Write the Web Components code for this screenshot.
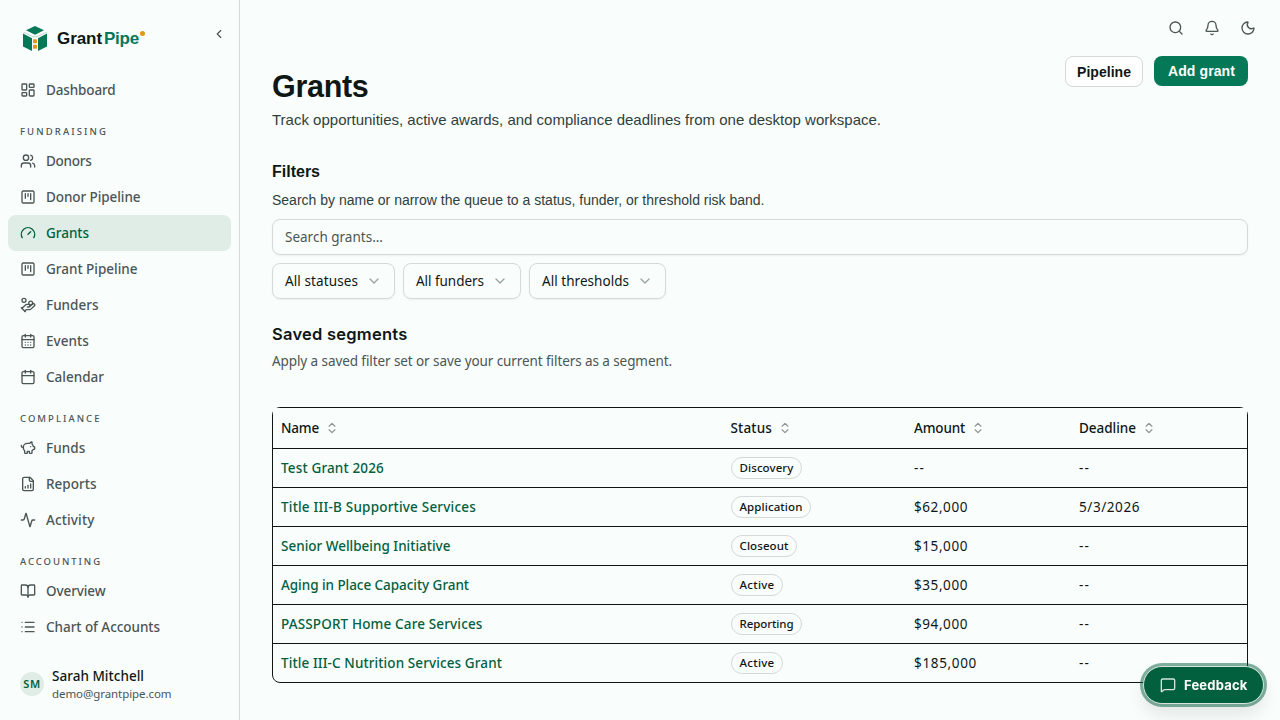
<!DOCTYPE html>
<html lang="en">
<head>
<meta charset="utf-8">
<title>Grants - GrantPipe</title>
<style>
  html, body {
    margin: 0;
    height: 100%;
  }

  body {
    --bg: #f9fdfc;
    --ink: #0f1716;
    --muted: #4b5554;
    --line: #d3dad8;
    --brand: #047857;
    --brand-dark: #03603f;
    --tint: #dfede6;
    --sans: "Noto Sans", Roboto, sans-serif;
    --arial: "Liberation Sans", Arial, sans-serif;
    background: var(--bg);
    color: var(--ink);
    font: 13.5px/20px var(--sans);
    overflow: hidden;
  }
</style>
</head>
<body>

<grant-app>
  <side-bar slot="sidebar">
    <nav-item icon="dashboard" fit="69.5">Dashboard</nav-item>
    <nav-group label="FUNDRAISING" fit="88">
      <nav-item icon="users" fit="45.5">Donors</nav-item>
      <nav-item icon="kanban" fit="94.5">Donor Pipeline</nav-item>
      <nav-item icon="gauge" fit="43" active>Grants</nav-item>
      <nav-item icon="kanban" fit="91.5">Grant Pipeline</nav-item>
      <nav-item icon="coins" fit="52.5">Funders</nav-item>
      <nav-item icon="events" fit="43">Events</nav-item>
      <nav-item icon="calendar" fit="58">Calendar</nav-item>
    </nav-group>
    <nav-group label="COMPLIANCE" fit="81.5">
      <nav-item icon="piggy" fit="39.5">Funds</nav-item>
      <nav-item icon="report" fit="50.5">Reports</nav-item>
      <nav-item icon="activity" fit="48.5">Activity</nav-item>
    </nav-group>
    <nav-group label="ACCOUNTING" fit="82">
      <nav-item icon="book" fit="59.5">Overview</nav-item>
      <nav-item icon="list" fit="114">Chart of Accounts</nav-item>
    </nav-group>
    <user-card slot="footer" initials="SM" name="Sarah Mitchell" email="demo@grantpipe.com"></user-card>
  </side-bar>

  <page-header>
    <fit-text slot="title" fit="96.5">Grants</fit-text>
    <fit-text slot="lead" fit="609">Track opportunities, active awards, and compliance deadlines from one desktop workspace.</fit-text>
    <action-button slot="actions" fit="54">Pipeline</action-button>
    <action-button slot="actions" primary fit="67">Add grant</action-button>
  </page-header>
  <filter-panel></filter-panel>
  <saved-segments></saved-segments>
  <grant-table></grant-table>
  <feedback-button slot="overlay"></feedback-button>
</grant-app>

<script>
const ICONS = {
  dashboard: '<rect width="7" height="9" x="3" y="3" rx="1"/><rect width="7" height="5" x="14" y="3" rx="1"/><rect width="7" height="9" x="14" y="12" rx="1"/><rect width="7" height="5" x="3" y="16" rx="1"/>',
  users: '<path d="M16 21v-2a4 4 0 0 0-4-4H6a4 4 0 0 0-4 4v2"/><path d="M16 3.128a4 4 0 0 1 0 7.744"/><path d="M22 21v-2a4 4 0 0 0-3-3.87"/><circle cx="9" cy="7" r="4"/>',
  kanban: '<rect width="18" height="18" x="3" y="3" rx="2"/><path d="M8 7v7"/><path d="M12 7v4"/><path d="M16 7v9"/>',
  gauge: '<path d="m12 14 4-4"/><path d="M3.34 19a10 10 0 1 1 17.32 0"/>',
  coins: '<path d="M11 15h2a2 2 0 1 0 0-4h-3c-.6 0-1.1.2-1.4.6L3 17"/><path d="m7 21 1.6-1.4c.3-.4.8-.6 1.4-.6h4c1.1 0 2.1-.4 2.8-1.2l4.6-4.4a2 2 0 0 0-2.75-2.91l-4.2 3.9"/><path d="m2 16 6 6"/><circle cx="16" cy="9" r="2.9"/><circle cx="6" cy="5" r="3"/>',
  events: '<path d="M8 2v4"/><path d="M16 2v4"/><rect width="18" height="18" x="3" y="4" rx="2"/><path d="M3 10h18"/><path d="M8 14h.01"/><path d="M12 14h.01"/><path d="M16 14h.01"/><path d="M8 18h.01"/><path d="M12 18h.01"/><path d="M16 18h.01"/>',
  calendar: '<path d="M8 2v4"/><path d="M16 2v4"/><rect width="18" height="18" x="3" y="4" rx="2"/><path d="M3 10h18"/>',
  piggy: '<path d="M11 17h3v2a1 1 0 0 0 1 1h2a1 1 0 0 0 1-1v-3a3.16 3.16 0 0 0 2-2h1a1 1 0 0 0 1-1v-2a1 1 0 0 0-1-1h-1a5 5 0 0 0-2-4V3a4 4 0 0 0-3.2 1.6l-.3.4H11a6 6 0 0 0-6 6v1a5 5 0 0 0 2 4v3a1 1 0 0 0 1 1h2a1 1 0 0 0 1-1z"/><path d="M16 10h.01"/><path d="M2 8v1a2 2 0 0 0 2 2h1"/>',
  report: '<path d="M15 2H6a2 2 0 0 0-2 2v16a2 2 0 0 0 2 2h12a2 2 0 0 0 2-2V7Z"/><path d="M14 2v4a2 2 0 0 0 2 2h4"/><path d="M8 18v-2"/><path d="M12 18v-4"/><path d="M16 18v-6"/>',
  activity: '<path d="M22 12h-2.48a2 2 0 0 0-1.93 1.46l-2.35 8.36a.25.25 0 0 1-.48 0L9.24 2.18a.25.25 0 0 0-.48 0l-2.35 8.36A2 2 0 0 1 4.49 12H2"/>',
  book: '<path d="M12 7v14"/><path d="M3 18a1 1 0 0 1-1-1V4a1 1 0 0 1 1-1h5a4 4 0 0 1 4 4 4 4 0 0 1 4-4h5a1 1 0 0 1 1 1v13a1 1 0 0 1-1 1h-6a3 3 0 0 0-3 3 3 3 0 0 0-3-3z"/>',
  list: '<path d="M3 5h.01"/><path d="M3 12h.01"/><path d="M3 19h.01"/><path d="M8 5h13"/><path d="M8 12h13"/><path d="M8 19h13"/>',
  search: '<path d="m21 21-4.34-4.34"/><circle cx="11" cy="11" r="8"/>',
  bell: '<path d="M10.268 21a2 2 0 0 0 3.464 0"/><path d="M3.262 15.326A1 1 0 0 0 4 17h16a1 1 0 0 0 .74-1.673C19.41 13.956 18 12.499 18 8A6 6 0 0 0 6 8c0 4.499-1.411 5.956-2.738 7.326"/>',
  moon: '<path d="M20.985 12.486a9 9 0 1 1-9.473-9.472c.405-.022.617.46.402.803a6 6 0 0 0 8.268 8.268c.344-.215.825-.004.803.401"/>',
  left: '<path d="m15 18-6-6 6-6"/>',
  down: '<path d="m6 9 6 6 6-6"/>',
  sort: '<path d="m7 15 5 5 5-5"/><path d="m7 9 5-5 5 5"/>',
  message: '<path d="M22 17a2 2 0 0 1-2 2H6.828a2 2 0 0 0-1.414.586l-2.202 2.202A.71.71 0 0 1 2 21.286V5a2 2 0 0 1 2-2h16a2 2 0 0 1 2 2z"/>'
};

const GRANTS = [
  { name: 'Test Grant 2026', fit: 103, status: 'Discovery', sfit: 54, amount: '--', deadline: '--' },
  { name: 'Title III-B Supportive Services', fit: 195, status: 'Application', sfit: 63, amount: '$62,000', deadline: '5/3/2026' },
  { name: 'Senior Wellbeing Initiative', fit: 169.5, status: 'Closeout', sfit: 49, amount: '$15,000', deadline: '--' },
  { name: 'Aging in Place Capacity Grant', fit: 188, status: 'Active', sfit: 35, amount: '$35,000', deadline: '--' },
  { name: 'PASSPORT Home Care Services', fit: 201.5, status: 'Reporting', sfit: 54, amount: '$94,000', deadline: '--' },
  { name: 'Title III-C Nutrition Services Grant', fit: 221, status: 'Active', sfit: 35, amount: '$185,000', deadline: '--' }
];

class BaseElement extends HTMLElement {
    constructor(){
        super();
        this._shadowRoot = this.attachShadow({ mode: 'open' });
    }

    connectedCallback(){
        const template = document.createElement('template');
        template.innerHTML = this.render();
        this._shadowRoot.replaceChildren(template.content.cloneNode(true));
    }

    attr(name){
        return this.getAttribute(name) || '';
    }
}

// Stroke icon on a 24 unit grid
class UiIcon extends BaseElement {
    render(){
        const size = this.attr('size') || 16;
        return `
          <style>
            :host { display: block; flex: none; width: ${size}px; height: ${size}px; }
            svg { display: block; }
          </style>
          <svg width="${size}" height="${size}" viewBox="0 0 24 24" fill="none" stroke="currentColor"
            stroke-width="2" stroke-linecap="round" stroke-linejoin="round">${ICONS[this.attr('name')]}</svg>
        `;
    }
}

// Single line of text, tracked out or in to the width given in "fit"
class FitText extends BaseElement {
    render(){
        return `
          <style>
            :host { display: inline-block; white-space: nowrap; }
          </style>
          <slot></slot>
        `;
    }

    connectedCallback(){
        super.connectedCallback();
        const fit = parseFloat(this.attr('fit'));
        if (!fit) return;
        const natural = this.getBoundingClientRect().width;
        this.style.letterSpacing = (fit - natural) / this.textContent.length + 'px';
    }
}

class GrantApp extends BaseElement {
    render(){
        return `
          <style>
            :host { display: flex; height: 100vh; }
            .content { flex: 1; min-width: 0; padding: 0 32px; }
            .topbar { display: flex; justify-content: flex-end; align-items: center; gap: 20px;
              height: 56px; margin-right: -8px; color: var(--muted); }
            .overlay { position: fixed; right: 16px; bottom: 16px; }
          </style>
          <slot name="sidebar"></slot>
          <div class="content">
            <div class="topbar">
              <ui-icon name="search"></ui-icon>
              <ui-icon name="bell"></ui-icon>
              <ui-icon name="moon"></ui-icon>
            </div>
            <slot></slot>
          </div>
          <div class="overlay"><slot name="overlay"></slot></div>
        `;
    }
}

class BrandLogo extends BaseElement {
    render(){
        return `
          <style>
            :host { display: flex; align-items: center; gap: 9px; font: bold 17px/24px var(--arial); }
            .word { display: flex; gap: 2px; }
            .pipe { color: var(--brand); }
            .dot { width: 5px; height: 5px; margin: 4px 0 0 -1.5px; border-radius: 50%; background: #dd9a1a; }
            svg { display: block; }
          </style>
          <svg width="26" height="28" viewBox="0 0 26 28">
            <path fill="#047857" d="M13 1 22 5.3 13 9.8 4 5.3z"/>
            <path fill="none" stroke="#a9cfc3" stroke-width=".8" d="M1.6 7.2 11 11.8h4L24.4 7.2"/>
            <path fill="#047857" d="M1 8.6 10 13.2V26L1 21.6zM25 8.6 16 13.2V26l9-4.4z"/>
            <rect x="11" y="14.2" width="4" height="4" rx="1" fill="#dd9a1a"/>
            <rect x="11" y="19.7" width="4" height="4" rx="1" fill="#dd9a1a"/>
          </svg>
          <div class="word">
            <fit-text fit="45">Grant</fit-text>
            <fit-text class="pipe" fit="35">Pipe</fit-text>
            <span class="dot"></span>
          </div>
        `;
    }
}

class SideBar extends BaseElement {
    render(){
        return `
          <style>
            :host { display: flex; flex-direction: column; box-sizing: border-box; flex: none;
              width: 240px; height: 100%; border-right: 1px solid var(--line); }
            header { display: flex; justify-content: space-between; align-items: flex-start;
              height: 47px; padding: 25px 13px 0 22px; }
            ui-icon { margin-top: 2px; color: var(--muted); }
            nav { flex: 1; padding: 0 8px; }
          </style>
          <header>
            <brand-logo></brand-logo>
            <ui-icon name="left" size="14"></ui-icon>
          </header>
          <nav><slot></slot></nav>
          <slot name="footer"></slot>
        `;
    }
}

class NavGroup extends BaseElement {
    render(){
        return `
          <style>
            .label { padding: 16px 12px 4px; font-size: 9.5px; font-weight: 500; line-height: 15px; color: var(--muted); }
            :host { display: block; }
            fit-text { display: block; width: max-content; }
          </style>
          <div class="label"><fit-text fit="${this.attr('fit')}">${this.attr('label')}</fit-text></div>
          <slot></slot>
        `;
    }
}

class NavItem extends BaseElement {
    render(){
        return `
          <style>
            :host { display: flex; align-items: center; gap: 10px; height: 36px; padding: 0 12px;
              border-radius: 8px; font-weight: 500; color: var(--muted); }
            :host([active]) { background: var(--tint); color: var(--brand-dark); }
          </style>
          <ui-icon name="${this.attr('icon')}"></ui-icon>
          <fit-text fit="${this.attr('fit')}"><slot></slot></fit-text>
        `;
    }

    connectedCallback(){
        super.connectedCallback();
        // the label goes in as plain text so that it can be measured
        this._shadowRoot.querySelector('fit-text').textContent = this.textContent;
    }
}

class UserCard extends BaseElement {
    render(){
        return `
          <style>
            :host { display: flex; align-items: center; gap: 8px; padding: 0 20px 19px; }
            .avatar { display: grid; place-items: center; width: 24px; height: 24px; border-radius: 50%;
              background: var(--tint); color: var(--brand-dark); font-size: 11px; font-weight: 600; }
            .who { display: flex; flex-direction: column; align-items: flex-start; }
            .name { font-weight: 500; line-height: 18px; }
            .mail { font-size: 11.5px; line-height: 16px; padding-top: 1px; margin-bottom: -1px; color: var(--muted); }
          </style>
          <div class="avatar"><fit-text fit="17.5">${this.attr('initials')}</fit-text></div>
          <div class="who">
            <fit-text class="name" fit="92">${this.attr('name')}</fit-text>
            <fit-text class="mail" fit="119.5">${this.attr('email')}</fit-text>
          </div>
        `;
    }
}

class PageHeader extends BaseElement {
    render(){
        return `
          <style>
            :host { display: flex; justify-content: space-between; font-family: var(--arial); }
            .text { padding-top: 11px; }
            h1 { margin: 0; font-size: 30.5px; line-height: 38px; }
            p { margin: 3px 0 0; font-size: 15px; line-height: 24px; color: #2f403b; }
            .actions { display: flex; align-items: flex-start; gap: 11px; }
          </style>
          <div class="text">
            <h1><slot name="title"></slot></h1>
            <p><slot name="lead"></slot></p>
          </div>
          <div class="actions"><slot name="actions"></slot></div>
        `;
    }
}

class ActionButton extends BaseElement {
    render(){
        return `
          <style>
            :host { display: block; }
            button { display: block; box-sizing: border-box; height: 31px; padding: 1px 11px 0 11.5px; border: 1px solid var(--line);
              border-radius: 8px; background: #fff; color: var(--ink); font: bold 14px/28px var(--arial); }
            :host([primary]) button { height: 30px; padding: 0 13px 0 14px; border: 0; background: var(--brand); color: #fff; }
          </style>
          <button><fit-text fit="${this.attr('fit')}">${this.textContent}</fit-text></button>
        `;
    }
}

class FilterSelect extends BaseElement {
    render(){
        return `
          <style>
            :host { display: flex; align-items: center; gap: 8px; box-sizing: border-box; height: 36px; padding: 0 12px;
              border: 1px solid var(--line); border-radius: 8px; box-shadow: 0 1px 2px rgba(0, 0, 0, .05); }
            ui-icon { color: #9aa3a1; }
          </style>
          <fit-text fit="${this.attr('fit')}">${this.attr('label')}</fit-text>
          <ui-icon name="down"></ui-icon>
        `;
    }
}

class FilterPanel extends BaseElement {
    render(){
        return `
          <style>
            :host { display: block; margin-top: 28px; }
            h2 { margin: 0; font: bold 16px/24px var(--arial); }
            p { margin: 6px 0 9px; font: 14px/20px var(--arial); color: #2f403b; }
            .search { display: flex; align-items: center; box-sizing: border-box; height: 36px; padding: 0 12px;
              border: 1px solid var(--line); border-radius: 8px; box-shadow: 0 1px 2px rgba(0, 0, 0, .05); color: var(--muted); }
            .row { display: flex; gap: 8px; margin-top: 8px; }
          </style>
          <h2><fit-text fit="48">Filters</fit-text></h2>
          <p><fit-text fit="492.5">Search by name or narrow the queue to a status, funder, or threshold risk band.</fit-text></p>
          <div class="search"><fit-text fit="98">Search grants...</fit-text></div>
          <div class="row">
            <filter-select label="All statuses" fit="73"></filter-select>
            <filter-select label="All funders" fit="68"></filter-select>
            <filter-select label="All thresholds" fit="87"></filter-select>
          </div>
        `;
    }
}

class SavedSegments extends BaseElement {
    render(){
        return `
          <style>
            :host { display: block; margin-top: 23px; }
            h2 { margin: 0; font: 600 16.5px/24px Inter, sans-serif; }
            p { margin: 5px 0 0; color: var(--muted); }
          </style>
          <h2><fit-text fit="135.5">Saved segments</fit-text></h2>
          <p><fit-text fit="400">Apply a saved filter set or save your current filters as a segment.</fit-text></p>
        `;
    }
}

class StatusBadge extends BaseElement {
    render(){
        return `
          <style>
            :host { display: flex; box-sizing: border-box; height: 22px; padding: 0 7px 0 8px; border: 1px solid var(--line);
              border-radius: 11px; font-size: 11.5px; font-weight: 500; line-height: 20px; }
          </style>
          <fit-text fit="${this.attr('fit')}">${this.attr('label')}</fit-text>
        `;
    }
}

class GrantTable extends BaseElement {
    render(){
        const columns = [['Name', 38], ['Status', 41.5], ['Amount', 51], ['Deadline', 57]];
        const widths = { '5/3/2026': 61, '$185,000': 63, '--': 11 };
        const plain = value => `<div><fit-text fit="${widths[value] || 54}">${value}</fit-text></div>`;

        return `
          <style>
            :host { display: block; margin-top: 36px; border: 1px solid var(--ink); border-radius: 8px; }
            .row { display: grid; grid-template-columns: 449.5px 183.5px 165px 1fr; align-items: center;
              height: 38px; border-bottom: 1px solid var(--ink); }
            .row:last-child { border-bottom: 0; }
            .row > div { display: flex; align-items: center; padding: 0 8px; }
            /* the header fill is square, so it covers the curve of the frame */
            .head { height: 40px; background: var(--bg); font-weight: 500; }
            .head > div { gap: 6px; }
            .head ui-icon { color: #8b9492; }
            a { font-weight: 500; color: var(--brand-dark); }
          </style>
          <div class="row head">
            ${columns.map(([label, fit]) => `<div><fit-text fit="${fit}">${label}</fit-text><ui-icon name="sort" size="14"></ui-icon></div>`).join('')}
          </div>
          ${GRANTS.map(grant => `
            <div class="row">
              <div><a><fit-text fit="${grant.fit}">${grant.name}</fit-text></a></div>
              <div><status-badge label="${grant.status}" fit="${grant.sfit}"></status-badge></div>
              ${plain(grant.amount)}
              ${plain(grant.deadline)}
            </div>
          `).join('')}
        `;
    }
}

class FeedbackButton extends BaseElement {
    render(){
        return `
          <style>
            button { display: flex; align-items: center; gap: 8px; box-sizing: border-box; height: 38px; padding: 0 15.5px 0 16px;
              border: 1px solid #d5e4dc; border-radius: 19px; background: var(--brand-dark); color: #fff;
              font: 700 13px/20px Inter, sans-serif;
              box-shadow: 0 0 0 3px rgba(3, 96, 63, .5), 0 10px 18px rgba(0, 0, 0, .1); }
            :host { display: block; }
            ui-icon { color: #d5e4dc; }
          </style>
          <button><ui-icon name="message"></ui-icon><fit-text fit="63.5">Feedback</fit-text></button>
        `;
    }
}

window.customElements.define('grant-app', GrantApp);
window.customElements.define('side-bar', SideBar);
window.customElements.define('brand-logo', BrandLogo);
window.customElements.define('nav-group', NavGroup);
window.customElements.define('nav-item', NavItem);
window.customElements.define('user-card', UserCard);
window.customElements.define('page-header', PageHeader);
window.customElements.define('action-button', ActionButton);
window.customElements.define('filter-panel', FilterPanel);
window.customElements.define('filter-select', FilterSelect);
window.customElements.define('saved-segments', SavedSegments);
window.customElements.define('grant-table', GrantTable);
window.customElements.define('status-badge', StatusBadge);
window.customElements.define('feedback-button', FeedbackButton);
window.customElements.define('ui-icon', UiIcon);
// last, when every line of text is in its place and can be measured
window.customElements.define('fit-text', FitText);
</script>
</body>
</html>
